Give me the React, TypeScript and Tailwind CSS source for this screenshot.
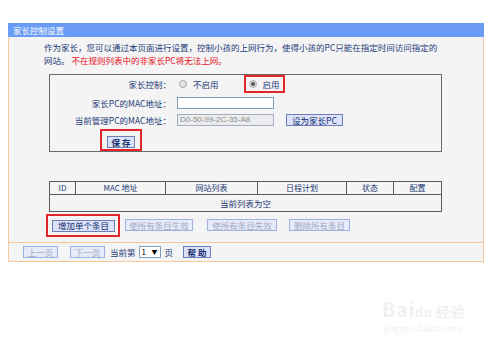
import React from 'react';

const font = { fontFamily: '"Noto Sans CJK SC", "Liberation Sans", sans-serif' };

// small radio circle drawn with css
const Radio: React.FC<{ checked?: boolean }> = ({ checked }) => (
  <span className="inline-flex items-center justify-center w-[8px] h-[8px] rounded-full border border-[#a9a9a9] bg-gradient-to-br from-[#f4f4f4] to-[#d6d6d6]">
    {checked && <span className="block w-[4px] h-[4px] rounded-full bg-[#555]" />}
  </span>
);

const Btn: React.FC<{ children: React.ReactNode; disabled?: boolean; bold?: boolean; w: string }> = ({ children, disabled, bold, w }) => (
  <span
    className={`inline-flex items-center justify-center h-[12px] leading-none border ${w} ${
      disabled
        ? 'border-[#9fb0e2] bg-[#e6ebfa] text-[#a3a9bf]'
        : 'border-[#6d7fb8] bg-[#dbe2fa] text-[#17306b]'
    } ${bold ? 'font-bold' : ''}`}
  >
    {children}
  </span>
);

const cols = [
  { label: 'ID', w: 'w-[26px]' },
  { label: 'MAC 地址', w: 'w-[90px]' },
  { label: '网站列表', w: 'w-[92px]' },
  { label: '日程计划', w: 'w-[89px]' },
  { label: '状态', w: 'w-[47px]' },
  { label: '配置', w: 'flex-1' },
];

const App: React.FC = () => {
  return (
    <div className="w-[500px] h-[350px] bg-white relative overflow-hidden text-[8.5px] text-[#1d3a78]" style={font}>
      <div className="pt-[23px] pl-[8px]">
        <div className="w-[476px]">
          {/* title bar */}
          <div className="h-[14px] bg-[#6a9cf6] text-white pl-[5px] leading-[14px]">家长控制设置</div>

          <div className="border-x border-b border-[#f5c9a0] bg-[#f4f4f4]">
            {/* intro text */}
            <div className="pl-[35px] pt-[4px] leading-[13px]">
              <div>作为家长，您可以通过本页面进行设置，控制小孩的上网行为，使得小孩的PC只能在指定时间访问指定的</div>
              <div>
                网站。 <span className="text-[#e8101b]">不在规则列表中的非家长PC将无法上网。</span>
              </div>
            </div>

            {/* settings box */}
            <div className="ml-[40px] mt-[7px] w-[393px] h-[78px] border border-[#6b6b6b] flex flex-col">
              <div className="flex items-center h-[18px]">
                <div className="w-[121px] text-right">家长控制：</div>
                <div className="ml-[8px] flex items-center gap-[6px]">
                  <Radio />
                  <span>不启用</span>
                </div>
                <div className="ml-[25px] h-[18px] w-[41px] border-2 border-[#e0262b] flex items-center pl-[3px] gap-[6px]">
                  <Radio checked />
                  <span>启用</span>
                </div>
              </div>
              <div className="flex items-center h-[17px] mt-[2px]">
                <div className="w-[121px] text-right">家长PC的MAC地址：</div>
                <div className="ml-[6px] w-[97px] h-[12px] bg-white border border-[#7f9db9]" />
              </div>
              <div className="flex items-center h-[15px] mt-[1px]">
                <div className="w-[121px] text-right">当前管理PC的MAC地址：</div>
                <div className="ml-[6px] w-[97px] h-[12px] bg-[#ececec] border border-[#9fb0c4] text-[#8d8d8d] leading-[10px] pl-[2px] text-[8px]" style={{ fontFamily: '"Liberation Sans", sans-serif' }}>
                  D0-50-99-2C-35-A8
                </div>
                <span className="ml-[12px]">
                  <Btn w="w-[57px]">设为家长PC</Btn>
                </span>
              </div>
              <div className="ml-[50px] mt-[2px] w-[42px] h-[22px] border-2 border-[#e0262b] flex items-start pl-[5px] pt-[5px]">
                <Btn w="w-[28px]" bold>保 存</Btn>
              </div>
            </div>

            {/* rules table */}
            <div className="ml-[40px] mt-[29px] w-[393px] border-[1.5px] border-[#5a5a5a]">
              <div className="flex h-[13px] leading-[12px] border-b border-[#5a5a5a] text-[8px]">
                {cols.map((c, i) => (
                  <div key={c.label} className={`${c.w} text-center ${i < cols.length - 1 ? 'border-r border-[#5a5a5a]' : ''}`}>
                    {c.label}
                  </div>
                ))}
              </div>
              <div className="h-[16px] leading-[16px] text-center">当前列表为空</div>
            </div>

            {/* action buttons */}
            <div className="flex items-center mt-[2px] ml-[37px] h-[23px]">
              <div className="w-[74px] h-[23px] border-2 border-[#e0262b] flex items-center pl-[4px]">
                <Btn w="w-[63px]">增加单个条目</Btn>
              </div>
              <span className="ml-[5px]"><Btn w="w-[68px]" disabled>使所有条目生效</Btn></span>
              <span className="ml-[14px]"><Btn w="w-[70px]" disabled>使所有条目失效</Btn></span>
              <span className="ml-[12px]"><Btn w="w-[61px]" disabled>删除所有条目</Btn></span>
            </div>

            {/* pager */}
            <div className="mt-[5px] border-t border-[#f5c9a0] h-[19px] flex items-center pl-[14px]">
              <Btn w="w-[35px]" disabled>上一页</Btn>
              <span className="ml-[12px]"><Btn w="w-[35px]" disabled>下一页</Btn></span>
              <span className="ml-[5px]">当前第</span>
              <span className="ml-[3px] inline-flex items-center justify-between w-[22px] h-[12px] bg-white border border-[#7f9db9] px-[2px] text-[8px] text-black leading-none">
                <span>1</span>
                <span className="text-[6px]">▼</span>
              </span>
              <span className="ml-[4px]">页</span>
              <span className="ml-[10px]"><Btn w="w-[28px]" bold>帮 助</Btn></span>
            </div>
          </div>
        </div>
      </div>

      {/* watermark */}
      <div className="absolute left-[382px] top-[298px] text-[#f1f1f1] select-none">
        <div className="text-[20px] leading-[22px] font-bold tracking-wide">
          Bai<span className="text-[13px]">du</span>
          <span className="text-[14px] ml-[3px]">经验</span>
        </div>
        <div className="text-[9px] leading-[12px] ml-[2px]">jingyan.baidu.com</div>
      </div>
    </div>
  );
};

export default App;
